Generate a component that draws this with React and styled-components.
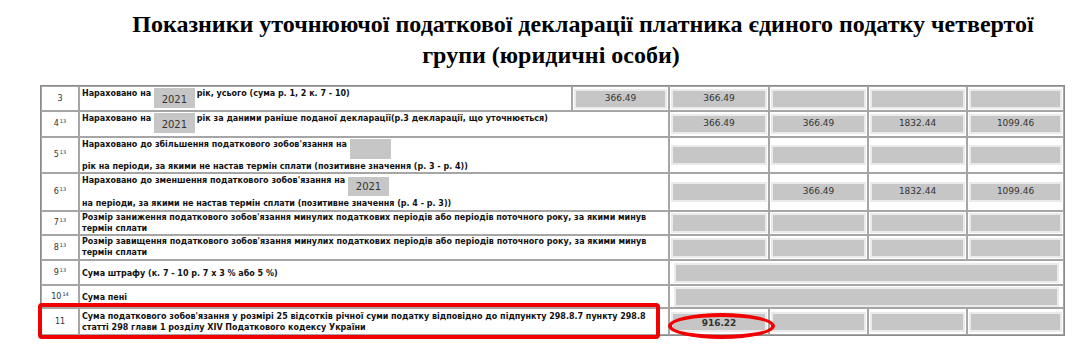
import React from "react";
import styled, { createGlobalStyle } from "styled-components";

const GlobalStyle = createGlobalStyle`
  html, body {
    margin: 0;
    padding: 0;
    background: #ffffff;
  }
`

const Page = styled.div`
  width: 1088px;
  height: 363px;
  overflow: hidden;
  padding-top: 9px;
  box-sizing: border-box;
`

const Title = styled.h1`
  margin: 0 0 14px 0;
  font-family: "Liberation Serif", "Times New Roman", serif;
  font-weight: bold;
  font-size: 24px;
  line-height: 31px;
  color: #000;
`

const TitleLine = styled.div`
  text-align: center;
  padding-left: ${({ $shift }) => $shift || "0px"};
`

const TableWrap = styled.div`
  position: relative;
  margin-left: 40px;
  width: 1023px;
`

const Table = styled.table`
  width: 1023px;
  table-layout: fixed;
  border-collapse: separate;
  border-spacing: 0;
  border: 1px solid #8a8a8a;
`

const Row = styled.tr`
  height: ${({ $h }) => $h}px;
`

const NumCell = styled.td`
  border: 1px solid #a6a6a6;
  padding: 0;
  text-align: center;
  vertical-align: middle;
  font-family: "DejaVu Sans", Verdana, sans-serif;
  font-size: 8px;
  line-height: 10px;
  color: #333;
`

const Sup = styled.sup`
  font-size: 5px;
  line-height: 0;
  vertical-align: 3px;
  margin-left: 1px;
`

const DescCell = styled.td`
  border: 1px solid #a6a6a6;
  padding: ${({ $pt }) => $pt ?? 1}px 2px 0 2px;
  vertical-align: ${({ $middle }) => ($middle ? "middle" : "top")};
  font-family: "DejaVu Sans", Verdana, sans-serif;
  font-weight: bold;
  font-size: 8px;
  line-height: 11px;
  color: #111;
`

const ValueCell = styled.td`
  border: 1px solid #a6a6a6;
  padding: 0 1px;
  vertical-align: middle;
`

const ValueBox = styled.div`
  height: 16px;
  overflow: hidden;
  margin: ${({ $wide }) => ($wide ? "0 3px" : "0")};
  background: #c6c6c6;
  border: 2px solid #ebebeb;
  text-align: center;
  font-family: "DejaVu Sans", Verdana, sans-serif;
  font-size: 9px;
  font-weight: ${({ $bold }) => ($bold ? "bold" : "normal")};
  line-height: ${({ $bold }) => ($bold ? "19px" : "14px")};
  color: #333;
`

const YearBox = styled.span`
  display: inline-block;
  vertical-align: top;
  width: 41px;
  height: ${({ $h }) => $h || 20}px;
  margin: ${({ $top }) => $top || 0}px 2px 0 0;
  background: #c6c6c6;
  font-family: "DejaVu Sans", Verdana, sans-serif;
  font-weight: normal;
  font-size: 10px;
  line-height: ${({ $lh }) => $lh || 24}px;
  text-align: center;
  color: #333;
`

const FirstLine = styled.div`
  height: ${({ $h }) => $h}px;
`

const SecondLine = styled.div`
  margin-top: ${({ $gap }) => $gap || 0}px;
`

const RedFrame = styled.div`
  position: absolute;
  left: -2px;
  top: 218px;
  width: 622px;
  height: 36px;
  box-sizing: border-box;
  border: 4px solid #f00000;
  border-radius: 4px;
  pointer-events: none;
`

const RedOval = styled.div`
  position: absolute;
  left: 628px;
  top: 228px;
  width: 107px;
  height: 26px;
  box-sizing: border-box;
  border: 4px solid #f00000;
  border-radius: 50%;
  pointer-events: none;
`

function Num({ n, sup }) {
  return (
    <NumCell>
      {n}
      {sup && <Sup>{sup}</Sup>}
    </NumCell>
  );
}

function Values({ items }) {
  return items.map((v, i) => (
    <ValueCell key={i}>
      <ValueBox $bold={v === "916.22"}>{v}</ValueBox>
    </ValueCell>
  ));
}

export default function App() {
  return (
    <Page>
      <GlobalStyle />
      <Title>
        <TitleLine $shift="78px">
          Показники уточнюючої податкової декларації платника єдиного податку четвертої
        </TitleLine>
        <TitleLine $shift="14px">групи (юридичні особи)</TitleLine>
      </Title>

      <TableWrap>
        <Table>
          <colgroup>
            <col style={{ width: 38 }} />
            <col style={{ width: 493 }} />
            <col style={{ width: 97 }} />
            <col style={{ width: 100 }} />
            <col style={{ width: 99 }} />
            <col style={{ width: 99 }} />
            <col style={{ width: 97 }} />
          </colgroup>
          <tbody>
            <Row $h={25}>
              <Num n="3" />
              <DescCell>
                Нараховано на <YearBox>2021</YearBox>рік, усього (сума р. 1, 2 к. 7 - 10)
              </DescCell>
              <Values items={["366.49", "366.49", "", "", ""]} />
            </Row>
            <Row $h={26}>
              <Num n="4" sup="13" />
              <DescCell colSpan={2}>
                Нараховано на <YearBox>2021</YearBox>рік за даними раніше поданої декларації(р.3 декларації, що уточнюється)
              </DescCell>
              <Values items={["366.49", "366.49", "1832.44", "1099.46"]} />
            </Row>
            <Row $h={35}>
              <Num n="5" sup="13" />
              <DescCell colSpan={2}>
                <FirstLine $h={20}>
                  Нараховано до збільшення податкового зобов'язання на <YearBox $h={20}></YearBox>
                </FirstLine>
                <SecondLine $gap={2}>
                  рік на періоди, за якими не настав термін сплати (позитивне значення (р. 3 - р. 4))
                </SecondLine>
              </DescCell>
              <Values items={["", "", "", ""]} />
            </Row>
            <Row $h={38}>
              <Num n="6" sup="13" />
              <DescCell colSpan={2}>
                <FirstLine $h={22}>
                  Нараховано до зменшення податкового зобов'язання на <YearBox $h={19} $lh={20} $top={2}>2021</YearBox>
                </FirstLine>
                <SecondLine $gap={1}>
                  на періоди, за якими не настав термін сплати (позитивне значення (р. 4 - р. 3))
                </SecondLine>
              </DescCell>
              <Values items={["", "366.49", "1832.44", "1099.46"]} />
            </Row>
            <Row $h={24}>
              <Num n="7" sup="13" />
              <DescCell colSpan={2} $pt={0}>
                Розмір заниження податкового зобов'язання минулих податкових періодів або періодів поточного року, за якими минув термін сплати
              </DescCell>
              <Values items={["", "", "", ""]} />
            </Row>
            <Row $h={25}>
              <Num n="8" sup="13" />
              <DescCell colSpan={2} $pt={0}>
                Розмір завищення податкового зобов'язання минулих податкових періодів або періодів поточного року, за якими минув термін сплати
              </DescCell>
              <Values items={["", "", "", ""]} />
            </Row>
            <Row $h={25}>
              <Num n="9" sup="13" />
              <DescCell colSpan={2} $middle>Сума штрафу (к. 7 - 10 р. 7 х 3 % або 5 %)</DescCell>
              <ValueCell colSpan={4}>
                <ValueBox $wide />
              </ValueCell>
            </Row>
            <Row $h={23}>
              <Num n="10" sup="14" />
              <DescCell colSpan={2} $middle>Сума пені</DescCell>
              <ValueCell colSpan={4}>
                <ValueBox $wide />
              </ValueCell>
            </Row>
            <Row $h={27}>
              <Num n="11" />
              <DescCell colSpan={2} $middle $pt={0}>
                Сума податкового зобов'язання у розмірі 25 відсотків річної суми податку відповідно до підпункту 298.8.7 пункту 298.8 статті 298 глави 1 розділу XIV Податкового кодексу України
              </DescCell>
              <Values items={["916.22", "", "", ""]} />
            </Row>
          </tbody>
        </Table>
        <RedFrame />
        <RedOval />
      </TableWrap>
    </Page>
  );
}
